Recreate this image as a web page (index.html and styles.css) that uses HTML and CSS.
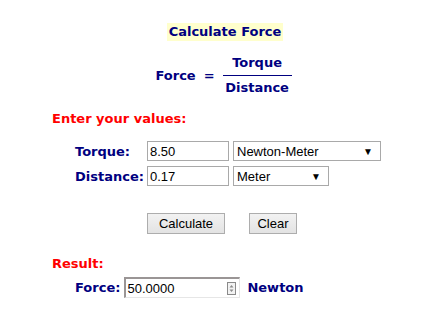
FILE: index.html
```html
<!DOCTYPE html>
<html>
<head>
<meta charset="utf-8">
<link rel="stylesheet" href="styles.css">
</head>
<body>
<div class="page">
  <div class="title-row"><span class="title">Calculate Force</span></div>
  <div class="formula">
    <span class="lhs">Force</span>
    <span class="eq">=</span>
    <span class="frac">
      <span class="num">Torque</span>
      <span class="den">Distance</span>
    </span>
  </div>
  <div class="heading">Enter your values:</div>
  <div class="fields">
    <label class="label">Torque:</label>
    <input class="field" type="text" value="8.50">
    <div class="select wide"><span>Newton-Meter</span><span class="arrow">▼</span></div>
    <label class="label">Distance:</label>
    <input class="field" type="text" value="0.17">
    <div class="select narrow"><span>Meter</span><span class="arrow">▼</span></div>
  </div>
  <div class="buttons">
    <button class="btn calc">Calculate</button>
    <button class="btn clear">Clear</button>
  </div>
  <div class="heading result-h">Result:</div>
  <div class="result">
    <span class="label">Force:</span>
    <div class="out"><span>50.0000</span><span class="spin"><svg width="9" height="13" viewBox="0 0 9 13"><rect x="0.5" y="0.5" width="8" height="12" fill="#f2f2f2" stroke="#8a8a8a"/><path d="M4.5 3 L6.5 5.5 H2.5 Z M4.5 10 L6.5 7.5 H2.5 Z" fill="#8a8a8a"/></svg></span></div>
    <span class="unit">Newton</span>
  </div>
</div>
</body>
</html>
```

FILE: styles.css
```css
html, body {
  margin: 0;
  padding: 0;
  background: #ffffff;
}
.page {
  width: 435px;
  font-family: "DejaVu Sans", Verdana, sans-serif;
  font-weight: bold;
  font-size: 13px;
  color: #000080;
  padding-top: 23px;
}
.title-row {
  display: flex;
  justify-content: center;
  padding-left: 15px;
}
.title {
  background: #ffffcc;
  padding: 2px 2px;
  line-height: 14px;
}
.formula {
  display: flex;
  align-items: center;
  justify-content: center;
  margin-top: 15px;
  padding-left: 12px;
}
.eq {
  margin: 0 8px;
}
.frac {
  display: flex;
  flex-direction: column;
  align-items: center;
}
.num {
  padding: 0 4px 5px;
  line-height: 14px;
  border-bottom: 1px solid #000080;
  width: 61px;
  text-align: center;
}
.den {
  padding-top: 5px;
  line-height: 14px;
}
.heading {
  color: #ff0000;
  margin-top: 16px;
  padding-left: 52px;
  line-height: 16px;
}
.fields {
  display: grid;
  grid-template-columns: 68px 82px auto;
  column-gap: 4px;
  row-gap: 5px;
  padding-left: 75px;
  margin-top: 14px;
  justify-content: start;
  align-items: center;
}
.field {
  box-sizing: border-box;
  width: 82px;
  height: 20px;
  border: 1px solid #a9a9a9;
  padding: 0 2px;
  font-family: "Liberation Sans", Arial, sans-serif;
  font-size: 13px;
  font-weight: normal;
  color: #000000;
  margin: 0;
}
.select {
  box-sizing: border-box;
  height: 20px;
  border: 1px solid #a9a9a9;
  display: flex;
  align-items: center;
  justify-content: space-between;
  padding: 0 7px 0 3px;
  font-family: "Liberation Sans", Arial, sans-serif;
  font-size: 13px;
  font-weight: normal;
  color: #000000;
}
.select.wide { width: 148px; }
.select.narrow { width: 96px; }
.arrow {
  font-size: 10px;
}
.buttons {
  display: flex;
  gap: 24px;
  padding-left: 147px;
  margin-top: 27px;
}
.btn {
  box-sizing: border-box;
  height: 21px;
  border: 1px solid #adadad;
  background: linear-gradient(#f2f2f2, #e3e3e3);
  font-family: "Liberation Sans", Arial, sans-serif;
  font-size: 13px;
  color: #000000;
  padding: 0;
  margin: 0;
}
.calc { width: 78px; }
.clear { width: 48px; }
.result-h {
  margin-top: 22px;
}
.result {
  display: flex;
  align-items: center;
  padding-left: 75px;
  margin-top: 5px;
}
.result .label {
  margin-right: 4px;
}
.out {
  box-sizing: border-box;
  width: 116px;
  height: 21px;
  border-top: 2px solid #9a9595;
  border-left: 2px solid #9a9595;
  border-right: 1px solid #e6e6e6;
  border-bottom: 1px solid #e6e6e6;
  display: flex;
  align-items: center;
  justify-content: space-between;
  padding: 0 3px 0 1px;
  font-family: "Liberation Sans", Arial, sans-serif;
  font-size: 13px;
  font-weight: normal;
  color: #000000;
}
.spin {
  display: flex;
}
.unit {
  margin-left: 7px;
}
```
